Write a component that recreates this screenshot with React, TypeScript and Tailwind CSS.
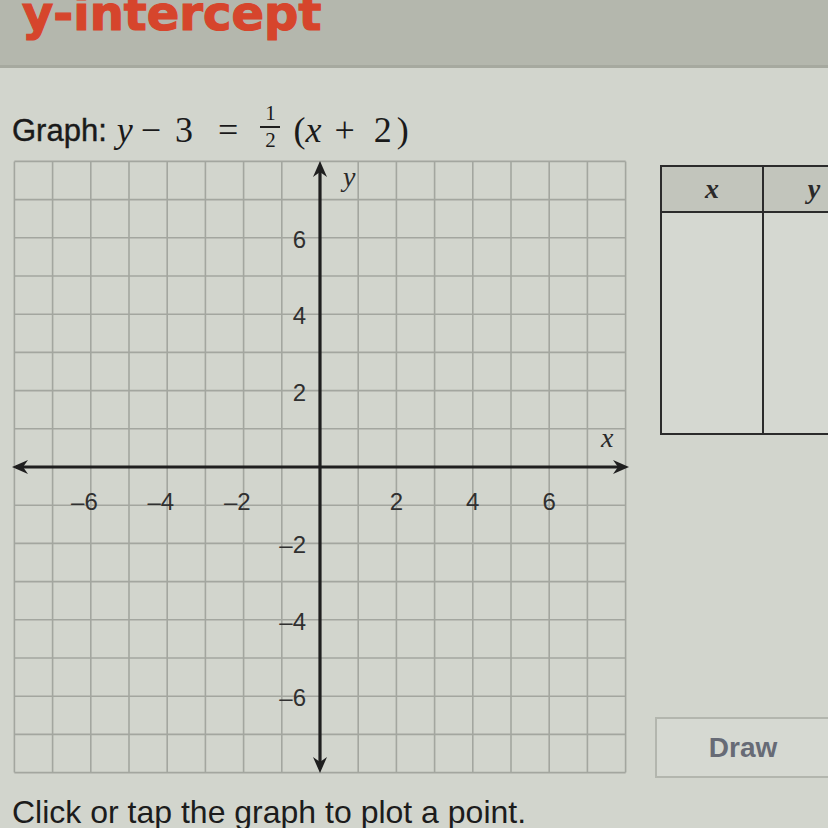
import React from "react";

const U = 38.2;
const OX = 320;
const OY = 315;

function Graph() {
  const ticks = Array.from({ length: 17 }, (_, i) => i - 8);
  const left = OX - 8 * U;
  const right = OX + 8 * U;
  const top = OY - 8 * U;
  const bottom = OY + 8 * U;
  const labels = [-6, -4, -2, 2, 4, 6];
  return (
    <svg width={640} height={642} viewBox="0 0 640 642" className="block shrink-0">
      {ticks.map((i) => (
        <line key={"v" + i} x1={OX + i * U} x2={OX + i * U} y1={top} y2={bottom} stroke="#a3a69f" strokeWidth={1.6} />
      ))}
      {ticks.map((i) => (
        <line key={"h" + i} y1={OY + i * U} y2={OY + i * U} x1={left} x2={right} stroke="#a3a69f" strokeWidth={1.6} />
      ))}
      {/* x axis */}
      <line x1={16} x2={624} y1={OY} y2={OY} stroke="#1f1f1f" strokeWidth={3.2} />
      <path d={`M12 ${OY} L28 ${OY - 7} L23 ${OY} L28 ${OY + 7} Z`} fill="#1f1f1f" />
      <path d={`M629 ${OY} L613 ${OY - 7} L618 ${OY} L613 ${OY + 7} Z`} fill="#1f1f1f" />
      {/* y axis */}
      <line x1={OX} x2={OX} y1={14} y2={616} stroke="#1f1f1f" strokeWidth={3.2} />
      <path d={`M${OX} 9 L${OX - 7} 25 L${OX} 20 L${OX + 7} 25 Z`} fill="#1f1f1f" />
      <path d={`M${OX} 621 L${OX - 7} 605 L${OX} 610 L${OX + 7} 605 Z`} fill="#1f1f1f" />
      {labels.map((v) => (
        <text
          key={"xl" + v}
          x={v < 0 ? OX + v * U + 7 : OX + v * U}
          y={358}
          textAnchor={v < 0 ? "end" : "middle"}
          fontFamily="'Liberation Sans', Arial, sans-serif"
          fontSize={24}
          fill="#303030"
        >
          {v < 0 ? "\u2013" + Math.abs(v) : v}
        </text>
      ))}
      {labels.map((v) => (
        <text
          key={"yl" + v}
          x={306}
          y={OY - v * U + 10}
          textAnchor="end"
          fontFamily="'Liberation Sans', Arial, sans-serif"
          fontSize={24}
          fill="#303030"
        >
          {v < 0 ? "\u2013" + Math.abs(v) : v}
        </text>
      ))}
      <text x={343} y={34} fontFamily="'Liberation Serif', 'Times New Roman', serif" fontStyle="italic" fontSize={28} fill="#2a2a2a">
        y
      </text>
      <text x={601} y={295} fontFamily="'Liberation Serif', 'Times New Roman', serif" fontStyle="italic" fontSize={28} fill="#2a2a2a">
        x
      </text>
    </svg>
  );
}

export default function App() {
  const serif = "font-['Liberation_Serif',serif] text-[36px] leading-none";
  return (
    <div className="w-[828px] h-[828px] overflow-hidden bg-[#d2d5cd] font-['Liberation_Sans',Arial,sans-serif] text-[#1e1e1e]">
      <header className="h-[68px] bg-[#b4b7ad] border-b-[3px] border-[#a6a99f] overflow-hidden pl-[22px]">
        <div className="-mt-[11px] text-[48px] leading-none font-bold text-[#d6452c] [-webkit-text-stroke:1.2px_#d6452c] font-['DejaVu_Sans',sans-serif] whitespace-nowrap">
          y-intercept
        </div>
      </header>

      <div className="mt-[40px] h-[44px] flex items-center pl-[12px] whitespace-nowrap text-[#1a1a1a]">
        <span className="text-[31px] leading-none [-webkit-text-stroke:0.4px_#1a1a1a]">Graph:</span>
        <span className={"ml-[10px] italic " + serif}>y</span>
        <span className={"ml-[8px] " + serif}>−</span>
        <span className={"ml-[14px] " + serif}>3</span>
        <span className={"ml-[25px] " + serif}>=</span>
        <span className="ml-[22px] pb-[6px] flex flex-col items-center font-['Liberation_Serif',serif] text-[21px] leading-none">
          <span>1</span>
          <span className="w-[20px] h-[2px] bg-[#1e1e1e] my-[2px]"></span>
          <span>2</span>
        </span>
        <span className={"ml-[13px] " + serif}>(</span>
        <span className={"ml-[0px] italic " + serif}>x</span>
        <span className={"ml-[13px] " + serif}>+</span>
        <span className={"ml-[19px] " + serif}>2</span>
        <span className={"ml-[5px] " + serif}>)</span>
      </div>

      <div className="flex">
        <Graph />
        <div className="pl-[15px] flex flex-col items-start">
          <div className="ml-[5px] mt-[13px] w-[206px] border-2 border-[#2b2b2b] shrink-0">
            <div className="flex h-[46px] bg-[#c2c5bc] border-b-2 border-[#2b2b2b]">
              <div className="w-[102px] border-r-2 border-[#2b2b2b] flex items-center justify-center font-['Liberation_Serif',serif] italic font-bold text-[28px] text-[#2a2a2a]">
                x
              </div>
              <div className="flex-1 flex items-center justify-center font-['Liberation_Serif',serif] italic font-bold text-[28px] text-[#2a2a2a]">
                y
              </div>
            </div>
            <div className="flex h-[220px] bg-[#d5d8d1]">
              <div className="w-[102px] border-r-2 border-[#2b2b2b]"></div>
              <div className="flex-1"></div>
            </div>
          </div>
          <button className="mt-[282px] w-[176px] h-[61px] border-2 border-[#b3b6ae] bg-[#d6d9d2] flex items-center justify-center text-[28px] font-bold text-[#676b76] shrink-0">
            Draw
          </button>
        </div>
      </div>

      <div className="pl-[12px] pt-[2px] text-[32px] leading-none text-[#1c1c1c] whitespace-nowrap">
        Click or tap the graph to plot a point.
      </div>
    </div>
  );
}
